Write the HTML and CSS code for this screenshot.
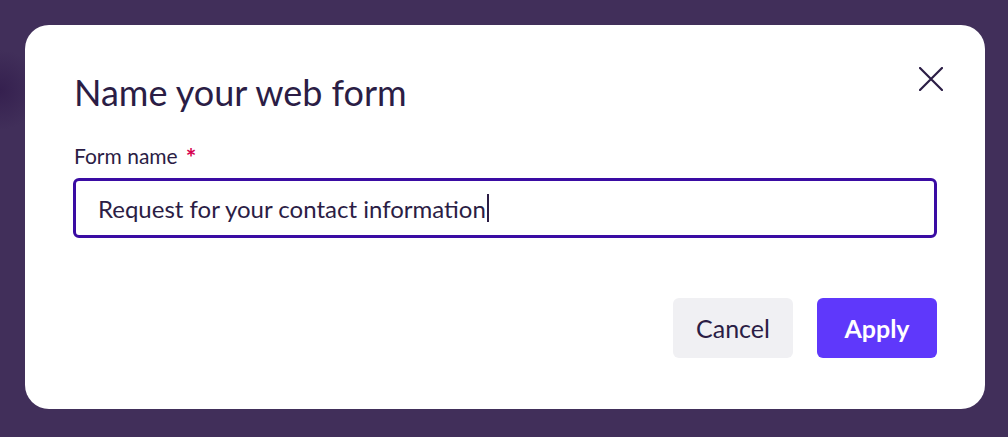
FILE: index.html
```html
<!DOCTYPE html>
<html lang="en">
<head>
<meta charset="utf-8">
<title>Name your web form</title>
<link rel="stylesheet" href="styles.css">
</head>
<body>
<div class="backdrop">
  <div class="modal" role="dialog" aria-labelledby="modal-title">
    <div class="modal-head">
      <h1 id="modal-title" class="modal-title">Name your web form</h1>
      <button class="close-btn" aria-label="Close">
        <svg width="24" height="24" viewBox="0 0 24 24" fill="none" stroke="#2b1d45" stroke-width="2.2" stroke-linecap="round"><path d="M1 1 L23 23 M23 1 L1 23"/></svg>
      </button>
    </div>
    <label class="field-label" for="form-name">Form name<span class="req">*</span></label>
    <div class="input-box">
      <span class="input-text">Request for your contact information</span><span class="caret"></span>
    </div>
    <div class="actions">
      <button class="btn btn-secondary">Cancel</button>
      <button class="btn btn-primary">Apply</button>
    </div>
  </div>
</div>
</body>
</html>
```

FILE: styles.css
```css
html, body {
  margin: 0;
  padding: 0;
  height: 100%;
}
body {
  background: #412f5a;
  font-family: "Lato", "Noto Sans", sans-serif;
  color: #2b1d45;
}
.backdrop {
  padding: 25px 23px 28px 25px;
  box-sizing: border-box;
  height: 437px;
  background: radial-gradient(circle at 0 90px, #35204f 0, rgba(53,32,79,0) 40px), #412f5a;
}
.modal {
  background: #ffffff;
  border-radius: 24px;
  height: 384px;
  box-sizing: border-box;
  padding: 38px 48px 51px 48px;
  display: flex;
  flex-direction: column;
}
.modal-head {
  display: flex;
  justify-content: space-between;
  align-items: flex-start;
}
.modal-title {
  margin: 0;
  font-weight: 400;
  font-size: 36px;
  line-height: 58px;
  color: #2b1d45;
  margin-left: 1px;
}
.close-btn {
  background: none;
  border: 0;
  padding: 0;
  margin-top: 4px;
  margin-right: -6px;
  width: 24px;
  height: 24px;
  cursor: pointer;
}
.close-btn svg { display: block; }
.field-label {
  margin-top: 24px;
  height: 22px;
  font-size: 21px;
  line-height: 22px;
  color: #2b1d45;
  margin-left: 1px;
}
.req {
  color: #d6004f;
  font-weight: 700;
  font-size: 25px;
  line-height: 0;
  margin-left: 8px;
  vertical-align: -3px;
}
.input-box {
  margin-top: 11px;
  height: 60px;
  box-sizing: border-box;
  border: 3px solid #3a0ca3;
  border-radius: 6px;
  display: flex;
  align-items: center;
  padding-left: 22px;
}
.input-text {
  font-size: 24px;
  color: #2b1d45;
}
.caret {
  display: inline-block;
  width: 2px;
  height: 28px;
  background: #2b1d45;
  margin-left: 1px;
}
.actions {
  margin-top: auto;
  display: flex;
  justify-content: flex-end;
  gap: 24px;
}
.btn {
  width: 120px;
  height: 60px;
  border: 0;
  border-radius: 6px;
  font-family: "Lato", "Noto Sans", sans-serif;
  font-size: 25px;
  cursor: pointer;
}
.btn-secondary {
  background: #f0f0f3;
  color: #2b1d45;
}
.btn-primary {
  background: #5f38fb;
  color: #ffffff;
  font-weight: 700;
}
```
